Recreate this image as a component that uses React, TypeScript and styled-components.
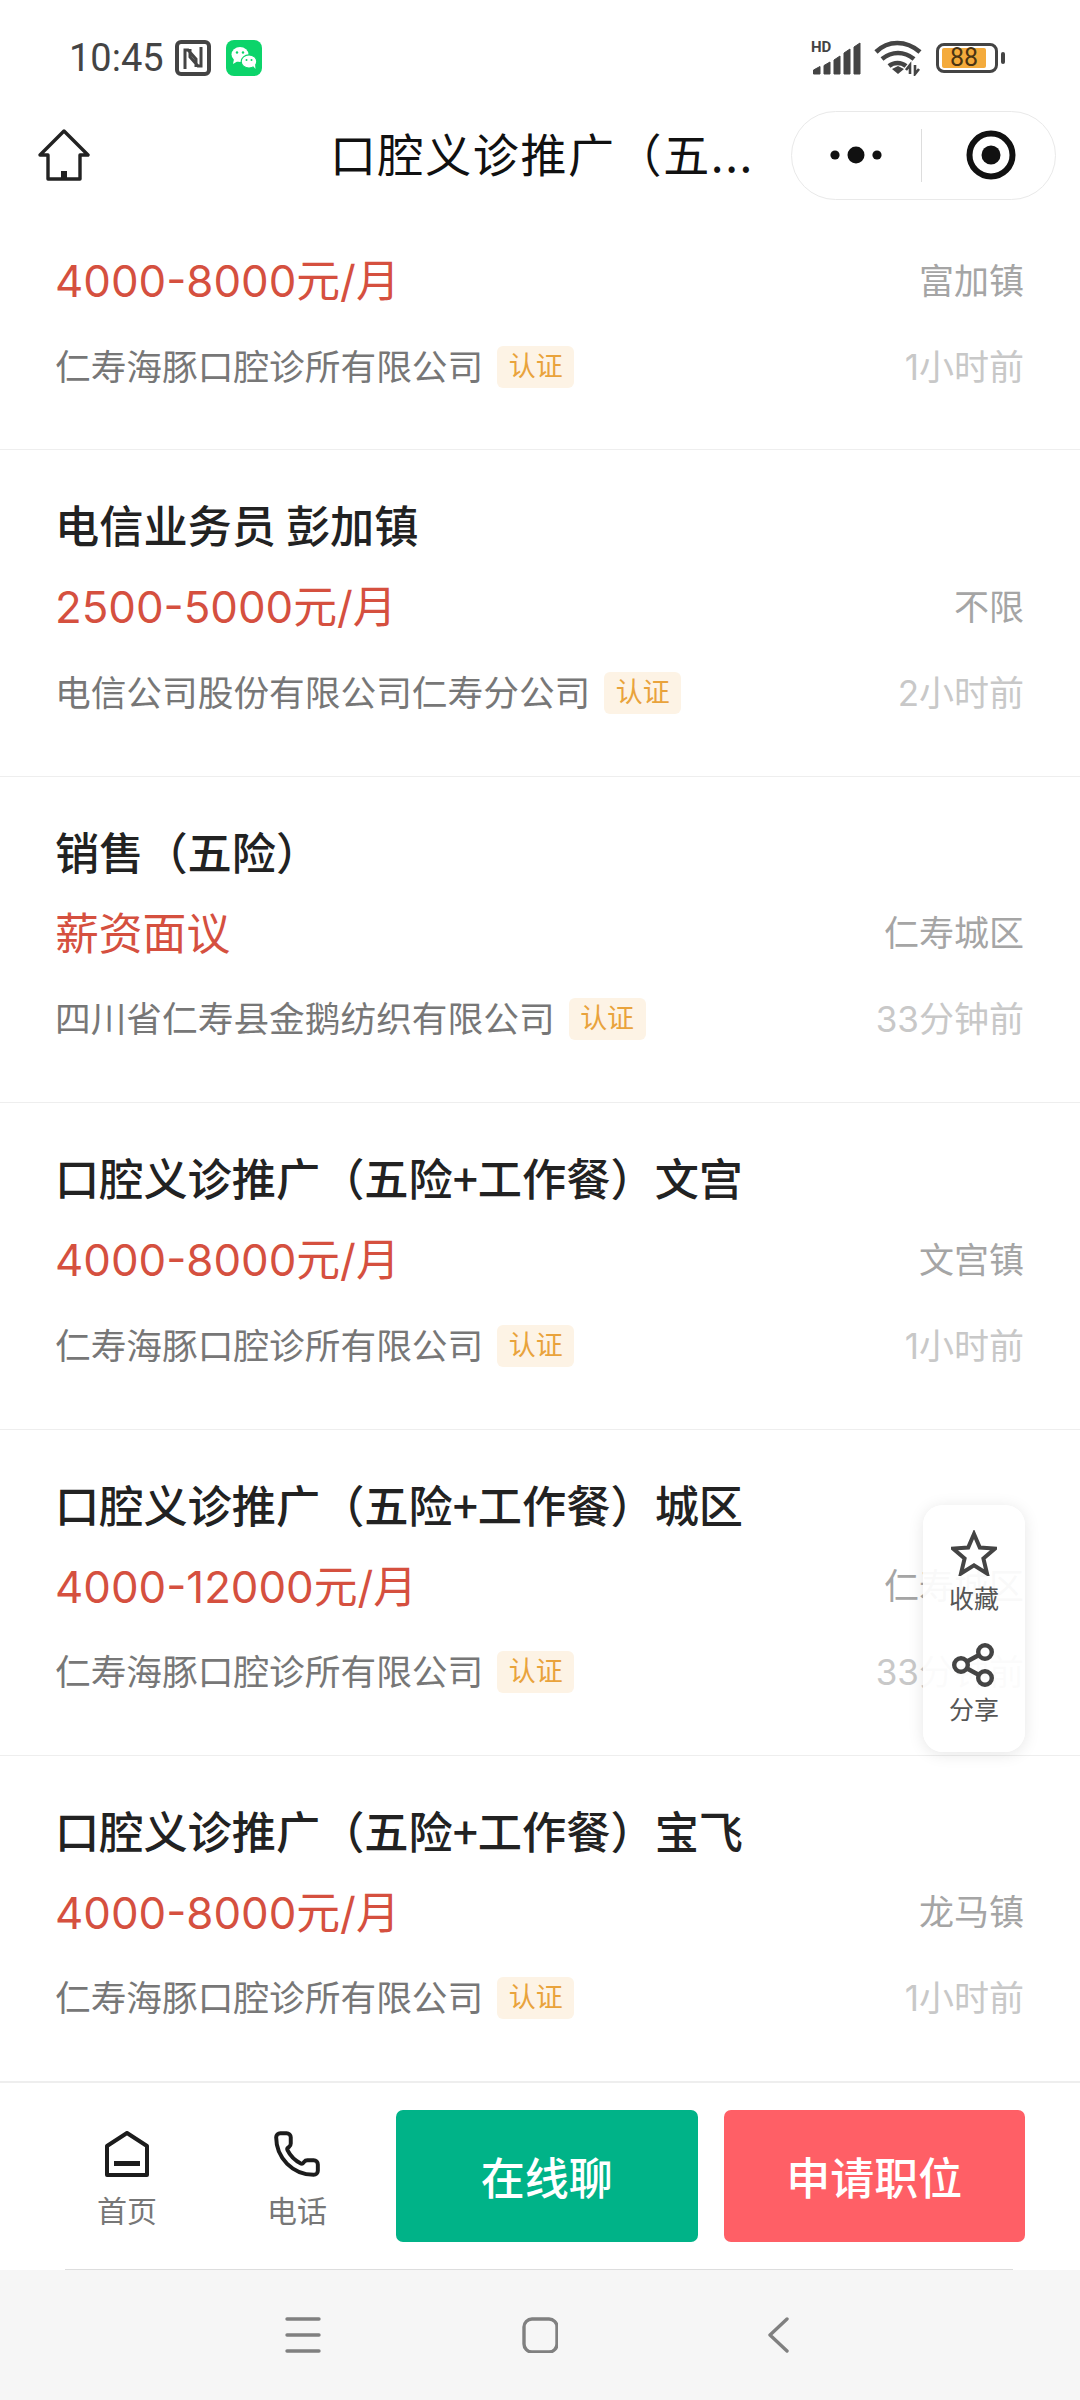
import styled, { createGlobalStyle } from "styled-components";
import { Phone } from "lucide-react";

const GlobalStyle = createGlobalStyle`
  html, body { margin: 0; padding: 0; background: #fff; }
  body { font-family: "Inter", "Noto Sans CJK SC", sans-serif; }
`;

const Page = styled.div`
  position: relative;
  width: 1080px;
  height: 2400px;
  display: flex;
  flex-direction: column;
  overflow: hidden;
  background: #fff;
`;

const StatusBar = styled.div`
  height: 110px;
  flex: none;
  display: flex;
  align-items: center;
  justify-content: space-between;
  padding: 6px 75px 0 69px;
  box-sizing: border-box;
`;
const StatusGroup = styled.div`
  display: flex;
  align-items: center;
`;
const Clock = styled.span`
  font-family: "Roboto", sans-serif;
  font-size: 38px;
  color: #444;
  width: 106px;
`;
const WechatIcon = styled.svg`
  margin-left: 15px;
`;
const Hd = styled.span`
  position: absolute;
  left: -1px;
  top: -3px;
  font: 700 15px "Roboto", sans-serif;
  color: #444;
`;
const SignalWrap = styled.div`
  position: relative;
  width: 50px;
  height: 34px;
  margin-right: 12px;
`;
const Battery = styled.div`
  width: 62px;
  height: 30px;
  margin: 0 0 0 14px;
  padding: 2px 3px;
  box-sizing: border-box;
  border: 3px solid #444;
  border-radius: 8px;
  display: flex;
`;
const BatteryFill = styled.div`
  width: 44px;
  background: #f4ab3c;
  border-radius: 2px;
  font-family: "Roboto", sans-serif;
  font-size: 25px;
  line-height: 20px;
  text-align: center;
  color: #4a3413;
`;
const BatteryCap = styled.div`
  width: 4px;
  height: 12px;
  margin-left: 3px;
  background: #444;
  border-radius: 2px;
`;

const NavBar = styled.div`
  height: 116px;
  flex: none;
  display: flex;
  align-items: center;
  padding: 0 24px 26px 38px;
  box-sizing: border-box;
  background: #fff;
  position: relative;
  z-index: 2;
`;
const HomeLink = styled.div`
  position: absolute;
  left: 38px;
  top: 19px;
  width: 52px;
  height: 52px;
`;
const NavTitle = styled.div`
  width: 430px;
  margin: -6px 31px 0 292px;
  flex: none;
  white-space: nowrap;
  font-size: 46px;
  letter-spacing: 1.6px;
  color: #111;
  font-family: "Noto Sans CJK SC", sans-serif;
`;
const Capsule = styled.div`
  width: 265px;
  height: 89px;
  box-sizing: border-box;
  border: 1.5px solid #e9e9e9;
  border-radius: 45px;
  display: flex;
  align-items: center;
`;
const CapsuleSide = styled.div<{ $shift?: number }>`
  flex: 1;
  display: flex;
  align-items: center;
  justify-content: center;
  padding-left: ${(p) => p.$shift ?? 0}px;
`;
const CapsuleLine = styled.div`
  width: 1.5px;
  height: 53px;
  background: #ddd;
`;

const List = styled.div`
  flex: 1;
  min-height: 0;
  overflow: hidden;
`;
const ListInner = styled.div`
  margin-top: -102px;
`;
const Item = styled.div`
  height: 326.4px;
  box-sizing: border-box;
  padding: 47px 56px 0 55px;
  border-bottom: 1.5px solid #eee;
`;
const Title = styled.div`
  font-size: 44.2px;
  line-height: 54px;
  font-weight: 500;
  color: #222;
  font-family: "Noto Sans CJK SC", sans-serif;
  white-space: nowrap;
`;
const Row = styled.div`
  display: flex;
  align-items: center;
  justify-content: space-between;
  height: 48px;
  margin-top: 29px;
`;
const MetaRow = styled(Row)`
  margin-top: 38px;
`;
const Salary = styled.span`
  font-size: 43.8px;
  color: #d5503f;
`;
const Place = styled.span`
  font-size: 35px;
  color: #a5a5a5;
`;
const Company = styled.div`
  display: flex;
  align-items: center;
`;
const CompanyName = styled.span`
  font-size: 35.7px;
  color: #777;
`;
const Badge = styled.span`
  margin: 5px 0 0 14px;
  width: 77px;
  height: 42px;
  border-radius: 6px;
  background: #fdf3e5;
  color: #e9a33c;
  font-size: 27px;
  line-height: 42px;
  text-align: center;
`;
const Time = styled.span`
  font-size: 35px;
  color: #c8c8c8;
`;

const FloatPanel = styled.div`
  position: absolute;
  left: 923px;
  top: 1505px;
  width: 102px;
  height: 247px;
  box-sizing: border-box;
  padding-top: 25px;
  display: flex;
  flex-direction: column;
  align-items: center;
  gap: 27px;
  border-radius: 20px;
  background: rgba(255, 255, 255, 0.93);
  box-shadow: 0 2px 16px rgba(0, 0, 0, 0.1);
`;
const FloatAction = styled.div`
  display: flex;
  flex-direction: column;
  align-items: center;
  gap: 6px;
`;
const FloatLabel = styled.span`
  font-size: 25px;
  line-height: 34px;
  color: #555;
`;

const BottomBar = styled.div`
  height: 187px;
  flex: none;
  display: flex;
  align-items: flex-start;
  padding: 27px 55px 0 0;
  box-sizing: border-box;
  background: #fff;
  border-top: 1.5px solid #eee;
`;
const TabButton = styled.div<{ $w: number; $after?: number }>`
  width: ${(p) => p.$w}px;
  margin-right: ${(p) => p.$after ?? 0}px;
  flex: none;
  display: flex;
  flex-direction: column;
  align-items: center;
  padding-top: 19px;
`;
const TabIcon = styled.div`
  height: 50px;
  display: flex;
  align-items: center;
`;
const TabLabel = styled.span`
  margin-top: 12px;
  font-size: 30px;
  line-height: 40px;
  color: #777;
`;
const ActionButton = styled.div<{ $bg: string; $before?: number }>`
  width: 302px;
  height: 132px;
  margin-left: ${(p) => p.$before ?? 0}px;
  border-radius: 7px;
  background: ${(p) => p.$bg};
  color: #fff;
  font-size: 44px;
  font-weight: 500;
  line-height: 132px;
  text-align: center;
  font-family: "Noto Sans CJK SC", sans-serif;
`;
const BarEdge = styled.div`
  height: 1.5px;
  flex: none;
  margin: 0 67px 0 65px;
  background: #ddd;
`;
const SystemNav = styled.div`
  height: 130px;
  flex: none;
  display: grid;
  grid-template-columns: 237px 243px 36px;
  align-items: center;
  padding-left: 285px;
  background: #f6f6f6;
`;

const jobs = [
  ["口腔义诊推广（五险+工作餐）富加", "4000-8000元/月", "富加镇", "仁寿海豚口腔诊所有限公司", "1小时前"],
  ["电信业务员 彭加镇", "2500-5000元/月", "不限", "电信公司股份有限公司仁寿分公司", "2小时前"],
  ["销售（五险）", "薪资面议", "仁寿城区", "四川省仁寿县金鹅纺织有限公司", "33分钟前"],
  ["口腔义诊推广（五险+工作餐）文宫", "4000-8000元/月", "文宫镇", "仁寿海豚口腔诊所有限公司", "1小时前"],
  ["口腔义诊推广（五险+工作餐）城区", "4000-12000元/月", "仁寿城区", "仁寿海豚口腔诊所有限公司", "33分钟前"],
  ["口腔义诊推广（五险+工作餐）宝飞", "4000-8000元/月", "龙马镇", "仁寿海豚口腔诊所有限公司", "1小时前"],
];

const App = () => {
  return (
    <Page>
      <GlobalStyle />
      <StatusBar>
        <StatusGroup>
          <Clock>10:45</Clock>
          <svg width="36" height="36" viewBox="0 0 36 36" fill="none" stroke="#444" strokeWidth="4">
            <rect x="2" y="2" width="32" height="32" rx="4" />
            <path d="M10 29V10h3l8 9v8M26 7v19h-3l-8-9V9" strokeWidth="3" />
          </svg>
          <WechatIcon width="36" height="36" viewBox="0 0 36 36">
            <rect width="36" height="36" rx="8" fill="#0cd46a" />
            <ellipse cx="14" cy="14.5" rx="8.5" ry="7.5" fill="#fff" />
            <path d="M8 19l-1 5 5-3z" fill="#fff" />
            <ellipse cx="23" cy="21.5" rx="7.8" ry="6.6" fill="#fff" stroke="#0cd46a" strokeWidth="1.2" />
            <path d="M27 26l2.5 3-.5-5z" fill="#fff" />
            <circle cx="11" cy="12.5" r="1.2" fill="#0cd46a" />
            <circle cx="17" cy="12.5" r="1.2" fill="#0cd46a" />
            <circle cx="20.5" cy="20" r="1" fill="#0cd46a" />
            <circle cx="25.5" cy="20" r="1" fill="#0cd46a" />
          </WechatIcon>
        </StatusGroup>
        <StatusGroup>
          <SignalWrap>
            <Hd>HD</Hd>
            <svg width="50" height="34" viewBox="0 0 50 34" fill="#444" stroke="#444" strokeWidth="1" strokeLinejoin="round">
              <path d="M1.5 29 8 25.5V33H1.5Z" />
              <path d="M12 24.5 18 21V33H12Z" />
              <path d="M22 19 28 15V33H22Z" />
              <path d="M32 12 38 8V33H32Z" />
              <path d="M42 6 48 2V33H42Z" />
            </svg>
          </SignalWrap>
          <svg width="48" height="36" viewBox="0 0 48 36" fill="none" stroke="#444" strokeWidth="4.6">
            <path d="M2 12C14 0 32 0 46 12" />
            <path d="M8 19c10-8 22-8 32 0" />
            <path d="M15 26c5-4 12-4 17 0" />
            <path d="M18 29l6-3 6 3-6 5z" fill="#444" stroke="none" />
            <path d="M36 34V25l-4 5M41 25v9l4-5" strokeWidth="2.6" />
          </svg>
          <Battery>
            <BatteryFill>88</BatteryFill>
          </Battery>
          <BatteryCap />
        </StatusGroup>
      </StatusBar>

      <NavBar>
        <HomeLink>
          <svg width="52" height="52" viewBox="0 0 52 52" fill="none" stroke="#222" strokeWidth="3.4" strokeLinejoin="round">
            <path d="M26 2 50 26H42V50H10V26H2Z" />
            <rect x="23" y="42" width="6" height="8" fill="#222" stroke="none" />
          </svg>
        </HomeLink>
        <NavTitle>口腔义诊推广（五...</NavTitle>
        <Capsule>
          <CapsuleSide>
            <svg width="52" height="20" viewBox="0 0 52 20" fill="#111">
              <circle cx="5" cy="10" r="4.6" />
              <circle cx="26" cy="10" r="8.5" />
              <circle cx="47" cy="10" r="4.6" />
            </svg>
          </CapsuleSide>
          <CapsuleLine />
          <CapsuleSide $shift={4}>
            <svg width="50" height="50" viewBox="0 0 50 50">
              <circle cx="25" cy="25" r="21.5" fill="none" stroke="#111" strokeWidth="6" />
              <circle cx="25" cy="25" r="9.5" fill="#111" />
            </svg>
          </CapsuleSide>
        </Capsule>
      </NavBar>

      <List>
        <ListInner>
          {jobs.map((job) => (
            <Item key={job[0] + job[2]}>
              <Title>{job[0]}</Title>
              <Row>
                <Salary>{job[1]}</Salary>
                <Place>{job[2]}</Place>
              </Row>
              <MetaRow>
                <Company>
                  <CompanyName>{job[3]}</CompanyName>
                  <Badge>认证</Badge>
                </Company>
                <Time>{job[4]}</Time>
              </MetaRow>
            </Item>
          ))}
        </ListInner>
      </List>

      <FloatPanel>
        <FloatAction>
          <svg width="46" height="46" viewBox="0 0 46 46" fill="none" stroke="#444" strokeWidth="4" strokeLinejoin="miter">
            <path d="M23 4 28.8 17.5 44 18.6 32.4 28.4 36 43.5 23 35.4 10 43.5 13.6 28.4 2 18.6 17.2 17.5Z" />
          </svg>
          <FloatLabel>收藏</FloatLabel>
        </FloatAction>
        <FloatAction>
          <svg width="44" height="44" viewBox="0 0 44 44" fill="none" stroke="#444" strokeWidth="4.4">
            <circle cx="33" cy="9" r="6.8" />
            <circle cx="9" cy="22" r="6.8" />
            <circle cx="33" cy="35" r="6.8" />
            <path d="M15 18.5 27 12M15 25.5 27 32" />
          </svg>
          <FloatLabel>分享</FloatLabel>
        </FloatAction>
      </FloatPanel>

      <BottomBar>
        <TabButton $w={254}>
          <TabIcon>
            <svg width="44" height="46" viewBox="0 0 44 46" fill="none" stroke="#1c1c1c" strokeWidth="4" strokeLinejoin="round">
              <path d="M22 2 42 15V44H2V15Z" />
              <rect x="9" y="30" width="26" height="5" fill="#1c1c1c" stroke="none" />
            </svg>
          </TabIcon>
          <TabLabel>首页</TabLabel>
        </TabButton>
        <TabButton $w={86} $after={56}>
          <TabIcon>
            <Phone size={50} color="#1c1c1c" strokeWidth={1.9} />
          </TabIcon>
          <TabLabel>电话</TabLabel>
        </TabButton>
        <ActionButton $bg="#00b388">在线聊</ActionButton>
        <ActionButton $bg="#ff5f66" $before={26}>申请职位</ActionButton>
      </BottomBar>
      <BarEdge />
      <SystemNav>
        <svg width="36" height="36" viewBox="0 0 36 36" fill="none" stroke="#808080" strokeWidth="3.4" strokeLinecap="round">
          <path d="M2 2H34M2 18H34M2 34H34" />
        </svg>
        <svg width="36" height="36" viewBox="0 0 36 36" fill="none" stroke="#808080" strokeWidth="3.4">
          <rect x="2" y="2" width="33" height="33" rx="8" />
        </svg>
        <svg width="36" height="36" viewBox="0 0 36 36" fill="none" stroke="#808080" strokeWidth="3.4" strokeLinecap="round" strokeLinejoin="round">
          <path d="M22 2 5 18 22 34" />
        </svg>
      </SystemNav>
    </Page>
  );
};
export default App;
